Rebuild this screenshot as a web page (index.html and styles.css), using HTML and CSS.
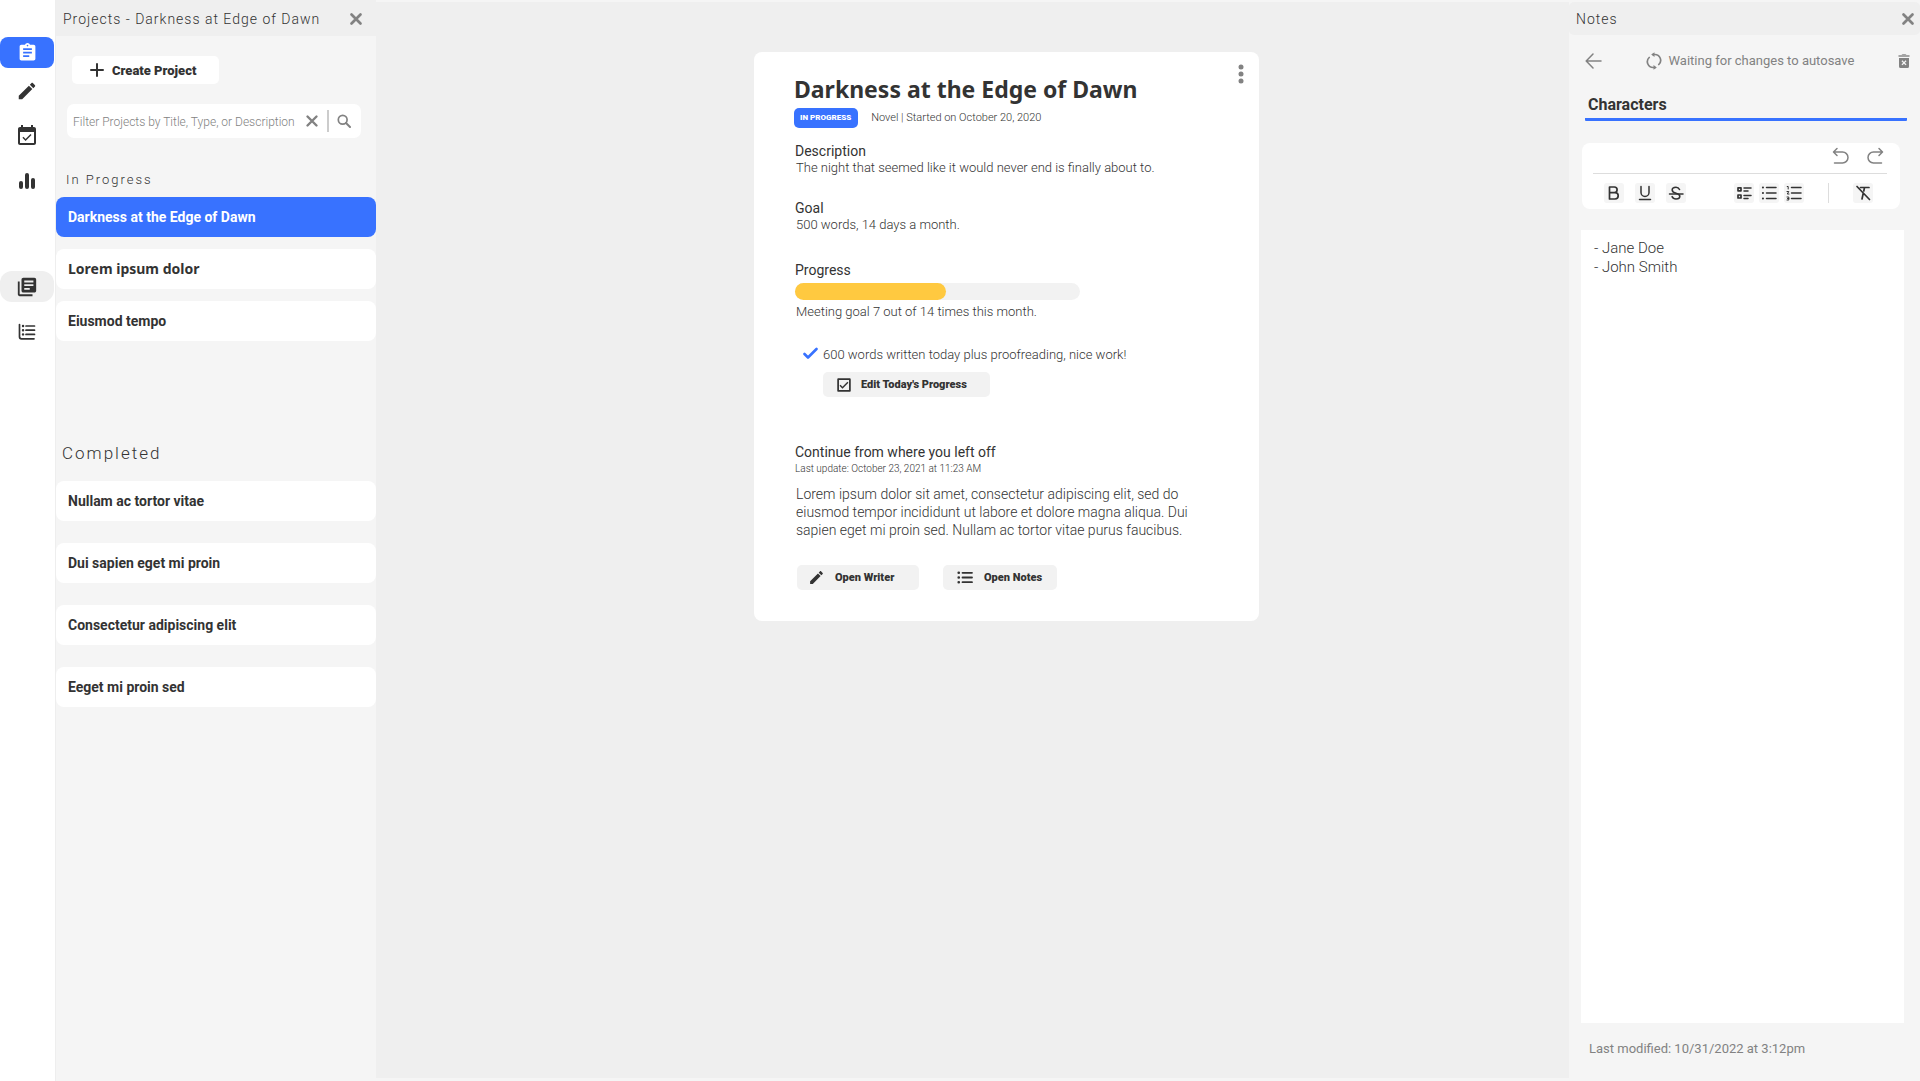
FILE: index.html
```html
<!DOCTYPE html>
<html lang="en">
<head>
<meta charset="utf-8">
<meta name="viewport" content="width=device-width, initial-scale=1">
<title>Projects - Darkness at Edge of Dawn</title>
<link rel="stylesheet" href="styles.css">
</head>
<body>
<div class="app">
  <nav class="rail" aria-label="Main">
    <div class="rail-group">
      <button class="rail-button rail-button-current" type="button" aria-label="Projects">
        <svg width="21" height="21" viewBox="0 0 24 24"><path d="M19 3h-4.18C14.4 1.84 13.3 1 12 1c-1.3 0-2.4.84-2.82 2H5c-1.1 0-2 .9-2 2v14c0 1.1.9 2 2 2h14c1.1 0 2-.9 2-2V5c0-1.1-.9-2-2-2zm-7 0c.55 0 1 .45 1 1s-.45 1-1 1-1-.45-1-1 .45-1 1-1zm2 14H7v-2h7v2zm3-4H7v-2h10v2zm0-4H7V7h10v2z"/></svg>
      </button>
    </div>
    <div class="rail-group">
      <button class="rail-button" type="button" aria-label="Writer">
        <svg width="22" height="22" viewBox="0 0 24 24"><path d="M3 17.25V21h3.75L17.81 9.94l-3.75-3.75L3 17.25zM20.71 7.04c.39-.39.39-1.02 0-1.41l-2.34-2.34c-.39-.39-1.02-.39-1.41 0l-1.83 1.83 3.75 3.75 1.83-1.83z"/></svg>
      </button>
      <button class="rail-button" type="button" aria-label="Calendar">
        <svg width="24" height="24" viewBox="0 0 24 24"><path d="M16.53 11.06L15.47 10l-4.88 4.88-2.12-2.12-1.06 1.06L10.59 17l5.94-5.94zM19 3h-1V1h-2v2H8V1H6v2H5c-1.11 0-1.99.9-1.99 2L3 19c0 1.1.89 2 2 2h14c1.1 0 2-.9 2-2V5c0-1.1-.9-2-2-2zm0 16H5V8h14v11z"/></svg>
      </button>
      <button class="rail-button" type="button" aria-label="Statistics">
        <svg width="18" height="18" viewBox="0 0 18 18"><rect x="1" y="9" width="4" height="8" rx="2"/><rect x="7" y="1" width="4" height="16" rx="2"/><rect x="13" y="6" width="4" height="11" rx="2"/></svg>
      </button>
    </div>
    <div class="rail-group">
      <button class="rail-button rail-button-open" type="button" aria-label="Notes">
        <svg width="22" height="22" viewBox="0 0 24 24"><path d="M4 6H2v14c0 1.1.9 2 2 2h14v-2H4V6zm16-4H8c-1.1 0-2 .9-2 2v12c0 1.1.9 2 2 2h12c1.1 0 2-.9 2-2V4c0-1.1-.9-2-2-2zm-1 9H9V9h10v2zm-4 4H9v-2h6v2zm4-8H9V5h10v2z"/></svg>
      </button>
      <button class="rail-button" type="button" aria-label="Outline">
        <svg class="line" width="18" height="18" viewBox="0 0 18 18"><path d="M1.5 1.5v12.300q0 2 2 2H16M8 3h8.500M8 7.200h8.500M8 11.400h8.500" stroke-width="1.700"/><path d="M5 3h.1M5 7.200h.1M5 11.400h.1" stroke-width="2.400"/></svg>
      </button>
    </div>
  </nav>

  <aside class="projects" aria-label="Projects">
    <header class="panel-bar">
      <h2 class="panel-title">Projects - Darkness at Edge of Dawn</h2>
      <button class="icon-button" type="button" aria-label="Close projects">
        <svg class="line" width="14" height="14" viewBox="0 0 14 14"><path d="M2.500 2.500l9 9M11.500 2.500l-9 9" stroke-width="2.700"/></svg>
      </button>
    </header>
    <button class="create" type="button">
      <svg class="line" width="14" height="14" viewBox="0 0 14 14"><path d="M7 1v12M1 7h12" stroke-width="2"/></svg>
      Create Project
    </button>
    <form class="filter" role="search">
      <input class="filter-input" type="text" aria-label="Filter projects" placeholder="Filter Projects by Title, Type, or Description">
      <button class="icon-button" type="reset" aria-label="Clear filter">
        <svg class="line" width="14" height="14" viewBox="0 0 14 14"><path d="M2.500 2.500l9 9M11.500 2.500l-9 9" stroke-width="2.400"/></svg>
      </button>
      <span class="filter-divider"></span>
      <button class="icon-button" type="submit" aria-label="Search">
        <svg class="line" width="14" height="14" viewBox="0 0 14 14"><circle cx="5.700" cy="5.700" r="4.400" stroke-width="1.700"/><path d="M9 9l4 4" stroke-width="2"/></svg>
      </button>
    </form>
    <section class="project-group">
      <h3 class="group-title">In Progress</h3>
      <ul class="project-list">
        <li><a class="project project-current" href="#darkness">Darkness at the Edge of Dawn</a></li>
        <li><a class="project project-draft" href="#lorem">Lorem ipsum dolor</a></li>
        <li><a class="project" href="#eiusmod">Eiusmod tempo</a></li>
      </ul>
    </section>
    <section class="project-group project-group-done">
      <h3 class="group-title group-title-done">Completed</h3>
      <ul class="project-list">
        <li><a class="project" href="#nullam">Nullam ac tortor vitae</a></li>
        <li><a class="project" href="#dui">Dui sapien eget mi proin</a></li>
        <li><a class="project" href="#consectetur">Consectetur adipiscing elit</a></li>
        <li><a class="project" href="#eeget">Eeget mi proin sed</a></li>
      </ul>
    </section>
  </aside>

  <main class="stage">
    <article class="card">
      <button class="card-menu" type="button" aria-label="Project menu">
        <svg width="6" height="20" viewBox="0 0 6 20"><circle cx="3" cy="3" r="2.500"/><circle cx="3" cy="10" r="2.500"/><circle cx="3" cy="17" r="2.500"/></svg>
      </button>
      <h1 class="card-title">Darkness at the Edge of Dawn</h1>
      <div class="card-meta">
        <span class="badge">IN PROGRESS</span>
        <span>Novel | Started on October 20, 2020</span>
      </div>
      <section class="fact">
        <h2 class="fact-title">Description</h2>
        <p class="fact-text">The night that seemed like it would never end is finally about to.</p>
      </section>
      <section class="fact goal">
        <h2 class="fact-title">Goal</h2>
        <p class="fact-text">500 words, 14 days a month.</p>
      </section>
      <section class="fact progress">
        <h2 class="fact-title">Progress</h2>
        <div class="meter" role="progressbar" aria-label="Monthly goal" aria-valuemin="0" aria-valuemax="14" aria-valuenow="7"><div class="meter-fill"></div></div>
        <p class="fact-text">Meeting goal 7 out of 14 times this month.</p>
      </section>
      <div class="today">
        <p class="fact-text today-text">
          <svg class="line tick" width="15" height="13" viewBox="0 0 15 13"><path d="M1.500 7l3.500 3.500L13.500 2" stroke-width="2.600"/></svg>
          600 words written today plus proofreading, nice work!
        </p>
        <button class="action action-edit" type="button">
          <svg width="18" height="18" viewBox="0 0 24 24"><path fill-rule="evenodd" d="M4.500 3h15c.8 0 1.500.7 1.500 1.500v15c0 .8-.7 1.500-1.500 1.500h-15c-.8 0-1.500-.7-1.500-1.500v-15C3 3.700 3.700 3 4.500 3zM5.300 5.300v13.400h13.400V5.300z"/><path d="M17.900 9l-1.400-1.400-6.500 6.600-2.600-2.600L6 13l4 4z"/></svg>
          Edit Today's Progress
        </button>
      </div>
      <section class="resume">
        <h2 class="fact-title">Continue from where you left off</h2>
        <p class="updated">Last update: October 23, 2021 at 11:23 AM</p>
        <p class="excerpt">Lorem ipsum dolor sit amet, consectetur adipiscing elit, sed do eiusmod tempor incididunt ut labore et dolore magna aliqua. Dui sapien eget mi proin sed. Nullam ac tortor vitae purus faucibus.</p>
      </section>
      <div class="card-actions">
        <button class="action action-writer" type="button">
          <svg width="17" height="17" viewBox="0 0 24 24"><path d="M3 17.25V21h3.75L17.81 9.94l-3.75-3.75L3 17.25zM20.71 7.04c.39-.39.39-1.02 0-1.41l-2.34-2.34c-.39-.39-1.02-.39-1.41 0l-1.83 1.83 3.75 3.75 1.83-1.83z"/></svg>
          Open Writer
        </button>
        <button class="action action-notes" type="button">
          <svg class="line" width="17" height="13" viewBox="0 0 17 13"><path d="M5.500 1.800H15M5.500 6.500H15M5.500 11.200H15" stroke-width="1.800"/><path d="M1.700 1.800h.1M1.700 6.500h.1M1.700 11.200h.1" stroke-width="2.600"/></svg>
          Open Notes
        </button>
      </div>
    </article>
  </main>

  <aside class="notes" aria-label="Notes">
    <header class="panel-bar notes-bar">
      <h2 class="panel-title">Notes</h2>
      <button class="icon-button" type="button" aria-label="Close notes">
        <svg class="line" width="14" height="14" viewBox="0 0 14 14"><path d="M2.500 2.500l9 9M11.500 2.500l-9 9" stroke-width="2.700"/></svg>
      </button>
    </header>
    <div class="notes-status">
      <button class="icon-button" type="button" aria-label="Back">
        <svg class="line" width="17" height="16" viewBox="0 0 17 16"><path d="M16 8H1.500M8 1L1.200 8 8 15" stroke-width="1.500"/></svg>
      </button>
      <p class="autosave">
        <svg class="line" width="16" height="18" viewBox="0 0 16 18"><path d="M7 2.500h1.500a5.800 5.800 0 0 1 4.300 10M9 15.500H7.500a5.800 5.800 0 0 1-4.300-10" stroke-width="1.700"/><path d="M8.500.3v4.600L5.200 2.600zM7.500 13.100v4.600l3.300-2.300z" class="solid"/></svg>
        Waiting for changes to autosave
      </p>
      <button class="icon-button" type="button" aria-label="Delete note">
        <svg width="12" height="16" viewBox="0 0 12 16"><path fill-rule="evenodd" d="M1 5h10v8.500q0 1.500-1.500 1.500h-7Q1 15 1 13.500zM4.400 7.300l-.9.900L5.100 9.800l-1.600 1.600.9.900L6 10.700l1.600 1.600.9-.9-1.600-1.600 1.600-1.600-.9-.9L6 8.900z"/><path opacity=".7" d="M.5 2H3.500L4.500 1h3l1 1h3v2H.5z"/></svg>
      </button>
    </div>
    <input class="note-title" type="text" aria-label="Note title" value="Characters">
    <div class="toolbar" role="toolbar" aria-label="Formatting">
      <div class="history">
        <button class="icon-button" type="button" aria-label="Undo">
          <svg class="line" width="17" height="18" viewBox="0 0 17 18"><path d="M2 5h8.500a5.500 5.500 0 0 1 0 11H2.500M5 1.500L1.500 5 5 8.500" stroke-width="1.500"/></svg>
        </button>
        <button class="icon-button" type="button" aria-label="Redo">
          <svg class="line" width="17" height="18" viewBox="0 0 17 18"><path d="M15 5H6.500a5.500 5.500 0 0 0 0 11H14.500M12 1.500L15.500 5 12 8.500" stroke-width="1.500"/></svg>
        </button>
      </div>
      <div class="formats">
        <div class="format-set format-set-text">
          <button class="format" type="button" aria-label="Bold"><svg class="line" width="20" height="20" viewBox="0 0 20 20"><path d="M5.500 4v12H11a3.200 3.200 0 0 0 0-6.400H5.500M5.500 4h4.800a2.800 2.800 0 0 1 0 5.600" stroke-width="1.700"/></svg></button>
          <button class="format" type="button" aria-label="Underline"><svg class="line" width="20" height="20" viewBox="0 0 20 20"><path d="M6 3.500v6a4 4 0 0 0 8 0v-6M4.500 16.500h11" stroke-width="1.500"/></svg></button>
          <button class="format" type="button" aria-label="Strikethrough"><svg class="line" width="20" height="20" viewBox="0 0 20 20"><path d="M13.500 6.500C12.800 5 11.600 4.300 10 4.300c-2.300 0-3.800 1.100-3.800 2.700C6.200 8.900 8 9.700 10 10.300s3.800 1.200 3.800 3-1.600 2.700-3.800 2.700c-1.800 0-3.200-.8-3.900-2.300" stroke-width="1.600"/><path d="M3.500 11h13.500" stroke-width="1.500"/></svg></button>
        </div>
        <div class="format-set">
          <button class="format" type="button" aria-label="Checklist"><svg class="line" width="20" height="20" viewBox="0 0 20 20"><path d="M4 4.800h3v3H4zM4 12h3v3H4z" stroke-width="1.700"/><path d="M10 5h7M10 8h4M10 12.500h7M10 15.500h4" stroke-width="1.500"/></svg></button>
          <button class="format" type="button" aria-label="Bulleted list"><svg class="line" width="20" height="20" viewBox="0 0 20 20"><path d="M7.500 4.500H17M7.500 10H17M7.500 15.500H17" stroke-width="1.500"/><path d="M3.900 4.500h.1M3.900 10h.1M3.900 15.500h.1" stroke-width="2"/></svg></button>
          <button class="format" type="button" aria-label="Numbered list"><svg class="line" width="20" height="20" viewBox="0 0 20 20"><path d="M7.500 4.500H17M7.500 10H17M7.500 15.500H17" stroke-width="1.500"/><path d="M3.200 3.500h1V6M3 8.500h1.800L3.300 11h1.700M3 14h1.800v3H3M3.500 15.500h1.300" stroke-width="1"/></svg></button>
        </div>
        <span class="formats-divider"></span>
        <button class="format" type="button" aria-label="Clear formatting"><svg class="line" width="20" height="20" viewBox="0 0 20 20"><path d="M7.500 4.500H16M11.500 4.500L10.800 8M10.200 10.500L9 16M4 3.500L16.500 16.500" stroke-width="1.700"/></svg></button>
      </div>
    </div>
    <textarea class="note-body" aria-label="Note text">- Jane Doe
- John Smith</textarea>
    <p class="modified">Last modified: 10/31/2022 at 3:12pm</p>
  </aside>
</div>
</body>
</html>
```
FILE: styles.css
```css
* {
  box-sizing: border-box;
}

body {
  margin: 0;
  background: #efefef;
  color: #333;
  font-family: Roboto, "Liberation Sans", sans-serif;
  font-size: 13px;
  line-height: 16px;
}

h1, h2, h3, p, ul {
  margin: 0;
  padding: 0;
}

ul {
  list-style: none;
}

button {
  margin: 0;
  padding: 0;
  border: 0;
  background: none;
  color: inherit;
  font-family: inherit;
  cursor: pointer;
}

input, textarea {
  border: 0;
  color: inherit;
  font-family: inherit;
  outline: none;
}

svg {
  display: block;
  flex: none;
  fill: currentColor;
}

.line {
  fill: none;
  stroke: currentColor;
  stroke-linecap: round;
  stroke-linejoin: round;
}

.solid {
  fill: currentColor;
  stroke: none;
}

.app {
  display: grid;
  grid-template-columns: 55px 321px 1fr 351px;
  min-height: 100vh;
}

/* Icon rail */

.rail {
  padding-top: 37px;
  background: #fff;
}

.rail-group {
  display: flex;
  flex-direction: column;
  gap: 14px;
  margin-bottom: 7px;
}

.rail-group:last-child {
  margin-top: 75px;
}

.rail-button {
  display: flex;
  align-items: center;
  justify-content: center;
  width: 54px;
  height: 31px;
  border-radius: 8px;
}

.rail-button-current {
  background: #3872ff;
  color: #fff;
}

.rail-button-open {
  border-radius: 12px;
  background: #efefef;
}

/* Shared panel header */

.panel-bar {
  display: flex;
  align-items: center;
  justify-content: space-between;
  height: 36px;
  padding: 1px 13px 0 7px;
  background: #efefef;
}

.panel-title {
  font-size: 14px;
  font-weight: 300;
  letter-spacing: 1px;
}

.icon-button {
  flex: none;
  color: #828282;
}

/* Projects panel */

.projects {
  padding-left: 1px;
  background: #f5f5f5;
  box-shadow: inset 1px 0 #eee;
}

.create {
  display: flex;
  align-items: center;
  gap: 8px;
  width: 147px;
  height: 28px;
  margin: 20px 0 20px 16px;
  padding-left: 18px;
  border-radius: 5px;
  background: #fff;
  font-size: 13px;
  font-weight: 900;
}

.filter {
  display: flex;
  align-items: center;
  gap: 8px;
  height: 34px;
  margin: 0 15px 0 11px;
  padding: 0 10px 0 6px;
  border-radius: 7px;
  background: #fff;
}

.filter-input {
  flex: 1;
  min-width: 0;
  padding: 2px 0 0;
  background: none;
  font-size: 12px;
  font-weight: 300;
}

.filter-input::placeholder {
  color: #828282;
  opacity: 1;
}

.filter-divider {
  width: 2px;
  height: 22px;
  background: #ccc;
}

.project-group {
  margin-top: 34px;
}

.project-group-done {
  margin-top: 104px;
}

.group-title {
  margin-bottom: 9px;
  padding-left: 10px;
  font-size: 13px;
  font-weight: 300;
  letter-spacing: 2px;
}

.group-title-done {
  margin-bottom: 20px;
  padding-left: 6px;
  font-size: 17px;
}

.project-list {
  display: flex;
  flex-direction: column;
  gap: 12px;
}

.project-group-done .project-list {
  gap: 22px;
}

.project {
  display: flex;
  align-items: center;
  height: 40px;
  padding-left: 12px;
  border-radius: 8px;
  background: #fff;
  color: inherit;
  font-size: 14px;
  font-weight: 700;
  text-decoration: none;
}

.project-current {
  background: #3872ff;
  color: #fff;
}

.project-draft {
  font-family: "Noto Sans", sans-serif;
}

/* Project card */

.stage {
  display: flex;
  align-items: flex-start;
  justify-content: center;
  padding: 50px 0 48px 68px;
  border-top: 2px solid #f5f5f5;
  border-bottom: 3px solid #f5f5f5;
}

.card {
  position: relative;
  width: 505px;
  padding: 22px 40px 31px;
  border-radius: 8px;
  background: #fff;
}

.card-menu {
  position: absolute;
  top: 12px;
  right: 15px;
  color: #828282;
}

.card-title {
  font-family: "Noto Sans", sans-serif;
  font-size: 23px;
  line-height: 30px;
}

.card-meta {
  display: flex;
  align-items: center;
  gap: 13px;
  margin-top: 4px;
  font-size: 11px;
  font-weight: 300;
}

.badge {
  padding: 0 7px 0 6px;
  border-radius: 5px;
  background: #3872ff;
  color: #fff;
  font-size: 8px;
  font-weight: 900;
  line-height: 20px;
}

.fact {
  margin-top: 15px;
  padding-left: 1px;
}

.goal {
  margin-top: 24px;
}

.progress {
  margin-top: 29px;
}

.fact-title {
  font-size: 14px;
  font-weight: 400;
  line-height: 17px;
}

.fact-text {
  padding-left: 1px;
  font-weight: 300;
}

.meter {
  width: 285px;
  height: 17px;
  margin: 4px 0;
  border-radius: 9px;
  background: #f2f2f2;
}

.meter-fill {
  width: 53%;
  height: 100%;
  border-radius: 9px;
  background: #ffc940;
}

.today {
  display: flex;
  flex-direction: column;
  align-items: flex-start;
  gap: 9px;
  margin-top: 27px;
  padding-left: 29px;
}

.today-text {
  display: flex;
  gap: 5px;
  margin-left: -21px;
}

.tick {
  color: #3872ff;
}

.action {
  display: flex;
  align-items: center;
  gap: 10px;
  height: 25px;
  border-radius: 5px;
  background: #f2f2f2;
  font-size: 11px;
  font-weight: 900;
}

.action-edit {
  gap: 8px;
  width: 167px;
  padding-left: 12px;
}

.resume {
  margin-top: 47px;
  padding-left: 1px;
}

.updated {
  font-size: 10px;
  font-weight: 300;
}

.excerpt {
  margin-top: 8px;
  padding-left: 1px;
  font-size: 14px;
  font-weight: 300;
  line-height: 18px;
}

.card-actions {
  display: flex;
  gap: 24px;
  margin-top: 26px;
  padding-left: 3px;
}

.action-writer {
  width: 122px;
  padding-left: 11px;
}

.action-notes {
  width: 114px;
  padding-left: 14px;
}

/* Notes panel */

.notes {
  display: flex;
  flex-direction: column;
  padding-top: 2px;
  background: #f5f5f5;
}

.notes-bar {
  height: 33px;
  padding: 0 5px 0 7px;
  border-radius: 5px;
}

.notes-status {
  display: flex;
  align-items: center;
  justify-content: space-between;
  height: 20px;
  margin-top: 16px;
  padding: 0 10px 0 16px;
  color: #828282;
}

.autosave {
  display: flex;
  align-items: center;
  gap: 7px;
}

.note-title {
  height: 32px;
  margin: 18px 13px 0 16px;
  padding: 2px 0 0 3px;
  border-bottom: 3px solid #3872ff;
  border-radius: 1px;
  background: none;
  font-size: 16px;
  font-weight: 700;
}

.toolbar {
  height: 66px;
  margin: 22px 20px 0 13px;
  padding: 0 13px 0 11px;
  border-radius: 8px;
  background: #fff;
}

.history {
  display: flex;
  align-items: center;
  justify-content: flex-end;
  gap: 18px;
  height: 31px;
  padding: 0 3px 4px 0;
  border-bottom: 1px solid #ddd;
}

.formats {
  display: flex;
  align-items: center;
  gap: 24px;
  margin-top: 9px;
  padding-left: 11px;
}

.format-set {
  display: flex;
  gap: 5px;
}

.format-set-text {
  gap: 11px;
  margin-right: 24px;
}

.format {
  border-radius: 3px;
  background: #f5f5f5;
}

.formats-divider {
  width: 1px;
  height: 20px;
  background: #ddd;
}

.note-body {
  flex: 1;
  margin: 21px 16px 0 12px;
  padding: 9px 13px;
  background: #fff;
  font-size: 15px;
  font-weight: 300;
  line-height: 19px;
  resize: none;
}

.modified {
  padding: 18px 20px 24px;
  color: #828282;
}
```
